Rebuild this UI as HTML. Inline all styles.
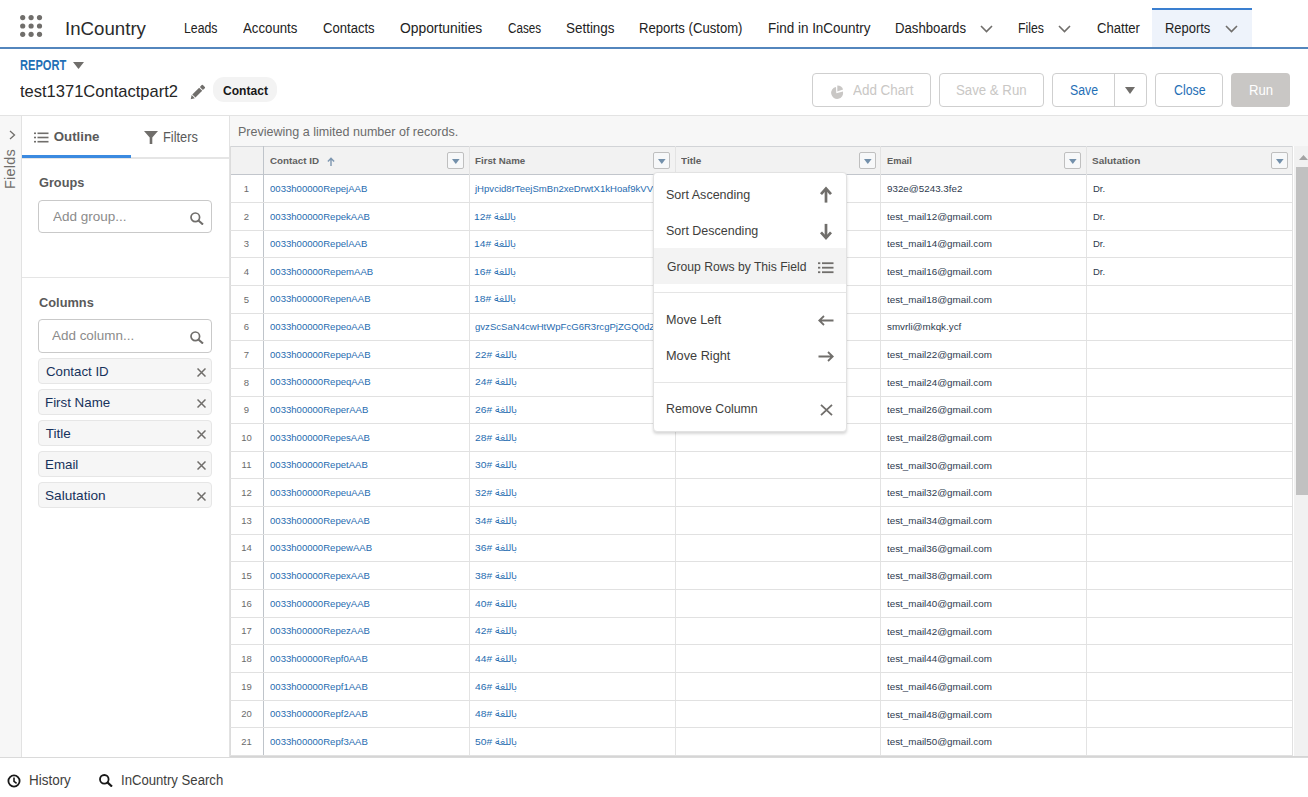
<!DOCTYPE html>
<html><head><meta charset="utf-8"><style>
html,body{margin:0;padding:0;width:1308px;height:797px;overflow:hidden;background:#fff}
body{position:relative;font-family:"Liberation Sans", sans-serif}
.t{position:absolute;white-space:nowrap;line-height:1;font-family:"Liberation Sans", sans-serif}
.r{position:absolute}
</style></head><body>
<div class="r" style="left:0px;top:0px;width:1308px;height:47px;background:#fff"></div>
<div class="r" style="left:0px;top:47px;width:1308px;height:2px;background:#5386bd"></div>
<div class="r" style="left:1152px;top:8px;width:100px;height:39px;background:#eef3fb"></div>
<div class="r" style="left:1152px;top:8px;width:100px;height:2px;background:#3a7fd0"></div>
<svg class="r" style="left:20px;top:15px;" width="23" height="23" viewBox="0 0 23 23"><circle cx="2.7" cy="2.6" r="2.6" fill="#706e6b"/><circle cx="2.7" cy="11" r="2.6" fill="#706e6b"/><circle cx="2.7" cy="19.3" r="2.6" fill="#706e6b"/><circle cx="11.1" cy="2.6" r="2.6" fill="#706e6b"/><circle cx="11.1" cy="11" r="2.6" fill="#706e6b"/><circle cx="11.1" cy="19.3" r="2.6" fill="#706e6b"/><circle cx="19.5" cy="2.6" r="2.6" fill="#706e6b"/><circle cx="19.5" cy="11" r="2.6" fill="#706e6b"/><circle cx="19.5" cy="19.3" r="2.6" fill="#706e6b"/></svg>
<div class="t" style="left:65.02px;top:19.41px;font-size:19px;font-weight:400;color:#2b2b2b;letter-spacing:0px;transform:scaleX(0.9827);transform-origin:0 0;">InCountry</div>
<div class="t" style="left:183.82px;top:21.15px;font-size:14px;font-weight:400;color:#222222;letter-spacing:0px;transform:scaleX(0.8784);transform-origin:0 0;">Leads</div>
<div class="t" style="left:243.40px;top:21.15px;font-size:14px;font-weight:400;color:#222222;letter-spacing:0px;transform:scaleX(0.9439);transform-origin:0 0;">Accounts</div>
<div class="t" style="left:322.90px;top:21.15px;font-size:14px;font-weight:400;color:#222222;letter-spacing:0px;transform:scaleX(0.9345);transform-origin:0 0;">Contacts</div>
<div class="t" style="left:400.00px;top:21.15px;font-size:14px;font-weight:400;color:#222222;letter-spacing:0px;transform:scaleX(0.9880);transform-origin:0 0;">Opportunities</div>
<div class="t" style="left:507.60px;top:21.15px;font-size:14px;font-weight:400;color:#222222;letter-spacing:0px;transform:scaleX(0.8325);transform-origin:0 0;">Cases</div>
<div class="t" style="left:566.04px;top:21.15px;font-size:14px;font-weight:400;color:#222222;letter-spacing:0px;transform:scaleX(0.9592);transform-origin:0 0;">Settings</div>
<div class="t" style="left:639.46px;top:21.15px;font-size:14px;font-weight:400;color:#222222;letter-spacing:0px;transform:scaleX(0.9367);transform-origin:0 0;">Reports (Custom)</div>
<div class="t" style="left:767.64px;top:21.15px;font-size:14px;font-weight:400;color:#222222;letter-spacing:0px;transform:scaleX(0.9613);transform-origin:0 0;">Find in InCountry</div>
<div class="t" style="left:895.46px;top:21.15px;font-size:14px;font-weight:400;color:#222222;letter-spacing:0px;transform:scaleX(0.9405);transform-origin:0 0;">Dashboards</div>
<div class="t" style="left:1018.12px;top:21.15px;font-size:14px;font-weight:400;color:#222222;letter-spacing:0px;transform:scaleX(0.8786);transform-origin:0 0;">Files</div>
<div class="t" style="left:1097.00px;top:21.15px;font-size:14px;font-weight:400;color:#222222;letter-spacing:0px;transform:scaleX(0.9348);transform-origin:0 0;">Chatter</div>
<div class="t" style="left:1165.38px;top:21.15px;font-size:14px;font-weight:400;color:#222222;letter-spacing:0px;transform:scaleX(0.9250);transform-origin:0 0;">Reports</div>
<svg class="r" style="left:979.5px;top:25px;" width="13" height="8" viewBox="0 0 13 8"><path d="M1 1 L6.5 6.5 L12 1" fill="none" stroke="#706e6b" stroke-width="1.6"/></svg>
<svg class="r" style="left:1057.5px;top:25px;" width="13" height="8" viewBox="0 0 13 8"><path d="M1 1 L6.5 6.5 L12 1" fill="none" stroke="#706e6b" stroke-width="1.6"/></svg>
<svg class="r" style="left:1225px;top:25px;" width="13" height="8" viewBox="0 0 13 8"><path d="M1 1 L6.5 6.5 L12 1" fill="none" stroke="#706e6b" stroke-width="1.6"/></svg>
<div class="r" style="left:0px;top:49px;width:1308px;height:66px;background:#fff"></div>
<div class="r" style="left:0px;top:115px;width:1308px;height:1px;background:#e3e3e3"></div>
<div class="t" style="left:19.91px;top:58.15px;font-size:14px;font-weight:700;color:#1f6fb6;letter-spacing:0px;transform:scaleX(0.7931);transform-origin:0 0;">REPORT</div>
<svg class="r" style="left:73px;top:62px;" width="11" height="7" viewBox="0 0 11 7"><path d="M0 0 L11 0 L5.5 7 Z" fill="#706e6b"/></svg>
<div class="t" style="left:19.60px;top:82.61px;font-size:17px;font-weight:400;color:#262626;letter-spacing:0px;transform:scaleX(0.9716);transform-origin:0 0;">test1371Contactpart2</div>
<svg class="r" style="left:185px;top:80px;" width="25" height="24" viewBox="0 0 25 24"><g transform="translate(5.7 19.2) rotate(-45)" fill="#706e6b"><path d="M0 0 L3.6 -2.2 L3.6 2.2 Z"/><rect x="4.5" y="-2.2" width="9.6" height="4.4"/><rect x="15" y="-2.2" width="3.6" height="4.4" rx="0.8"/></g></svg>
<div class="r" style="left:213px;top:77px;width:64px;height:25px;background:#f3f3f3;border-radius:11px"></div>
<div class="t" style="left:223.00px;top:84.17px;font-size:13.5px;font-weight:700;color:#181818;letter-spacing:0px;transform:scaleX(0.8940);transform-origin:0 0;">Contact</div>
<div class="r" style="left:812px;top:73px;width:119px;height:34px;border:1px solid #cfcfcf;border-radius:4px;background:#fff;box-sizing:border-box"></div>
<svg class="r" style="left:825px;top:80px;" width="25" height="24" viewBox="0 0 25 24"><path d="M11.3 13.2 L11 7 A6 6 0 1 0 18 11.6 Z" fill="#c9c7c5"/><path d="M12.3 11.4 L12.3 5.4 A6 6 0 0 1 18.1 9.6 Z" fill="#c9c7c5"/></svg>
<div class="t" style="left:853.20px;top:83.35px;font-size:14px;font-weight:400;color:#c9c7c5;letter-spacing:0px;transform:scaleX(0.9587);transform-origin:0 0;">Add Chart</div>
<div class="r" style="left:939px;top:73px;width:105px;height:34px;border:1px solid #cfcfcf;border-radius:4px;background:#fff;box-sizing:border-box"></div>
<div class="t" style="left:956.35px;top:83.35px;font-size:14px;font-weight:400;color:#c9c7c5;letter-spacing:0px;transform:scaleX(0.9452);transform-origin:0 0;">Save &amp; Run</div>
<div class="r" style="left:1052px;top:73px;width:95px;height:34px;border:1px solid #cfcfcf;border-radius:4px;background:#fff;box-sizing:border-box"></div>
<div class="r" style="left:1114px;top:73px;width:1px;height:34px;background:#cfcfcf"></div>
<div class="t" style="left:1069.62px;top:83.35px;font-size:14px;font-weight:400;color:#1f6fb6;letter-spacing:0px;transform:scaleX(0.8774);transform-origin:0 0;">Save</div>
<svg class="r" style="left:1125px;top:87px;" width="10" height="7" viewBox="0 0 10 7"><path d="M0 0 L10 0 L5 7 Z" fill="#706e6b"/></svg>
<div class="r" style="left:1155px;top:73px;width:68px;height:34px;border:1px solid #cfcfcf;border-radius:4px;background:#fff;box-sizing:border-box"></div>
<div class="t" style="left:1173.70px;top:83.35px;font-size:14px;font-weight:400;color:#1f6fb6;letter-spacing:0px;transform:scaleX(0.8833);transform-origin:0 0;">Close</div>
<div class="r" style="left:1231px;top:73px;width:59px;height:34px;background:#c9c7c5;border-radius:4px"></div>
<div class="t" style="left:1248.76px;top:83.35px;font-size:14px;font-weight:400;color:#fff;letter-spacing:0px;transform:scaleX(0.9375);transform-origin:0 0;">Run</div>
<div class="r" style="left:0px;top:116px;width:21px;height:641px;background:#f7f7f7"></div>
<div class="r" style="left:21px;top:116px;width:1px;height:641px;background:#e2e2e2"></div>
<div class="r" style="left:22px;top:116px;width:207px;height:641px;background:#fff"></div>
<div class="r" style="left:229px;top:116px;width:1px;height:641px;background:#e2e2e2"></div>
<div class="r" style="left:230px;top:116px;width:1078px;height:641px;background:#f7f7f7"></div>
<svg class="r" style="left:9px;top:130px;" width="7" height="10" viewBox="0 0 7 10"><path d="M1 1 L5.5 5 L1 9" fill="none" stroke="#706e6b" stroke-width="1.3"/></svg>
<div class="t" style="left:-10px;top:162px;width:40px;height:14px;font-size:14.5px;color:#706e6b;transform:rotate(-90deg);letter-spacing:0.2px;line-height:14px;text-align:center">Fields</div>
<div class="r" style="left:22px;top:157px;width:207px;height:2px;background:#e5e5e5"></div>
<div class="r" style="left:22px;top:155px;width:109px;height:3px;background:#3b8ae0"></div>
<svg class="r" style="left:34px;top:132px;" width="15" height="11" viewBox="0 0 15 11"><g fill="#706e6b"><rect x="0" y="0.5" width="2" height="1.6"/><rect x="3.5" y="0.5" width="11" height="1.6"/><rect x="0" y="4.7" width="2" height="1.6"/><rect x="3.5" y="4.7" width="11" height="1.6"/><rect x="0" y="8.9" width="2" height="1.6"/><rect x="3.5" y="8.9" width="11" height="1.6"/></g></svg>
<div class="t" style="left:53.70px;top:130.44px;font-size:13.3px;font-weight:700;color:#5a5a5a;letter-spacing:0px;">Outline</div>
<svg class="r" style="left:144px;top:131px;" width="14" height="13" viewBox="0 0 14 13"><path d="M0 0 L14 0 L8.3 6.5 L8.3 13 L5.7 13 L5.7 6.5 Z" fill="#706e6b"/></svg>
<div class="t" style="left:162.68px;top:130.15px;font-size:14px;font-weight:400;color:#5a5a5a;letter-spacing:0px;transform:scaleX(0.9162);transform-origin:0 0;">Filters</div>
<div class="t" style="left:38.80px;top:176.19px;font-size:13px;font-weight:700;color:#5a5a5a;letter-spacing:0px;transform:scaleX(0.9804);transform-origin:0 0;">Groups</div>
<div class="r" style="left:38px;top:200px;width:174px;height:33px;border:1px solid #c9c9c9;border-radius:4px;background:#fff;box-sizing:border-box"></div>
<div class="t" style="left:52.50px;top:210.25px;font-size:13.4px;font-weight:400;color:#8b8b8b;letter-spacing:0px;transform:scaleX(1.0069);transform-origin:0 0;">Add group...</div>
<svg class="r" style="left:189.5px;top:212px;" width="14" height="13" viewBox="0 0 14 13"><circle cx="5.3" cy="5.3" r="4.3" fill="none" stroke="#706e6b" stroke-width="1.7"/><path d="M8.4 8.4 L13 12.6" stroke="#706e6b" stroke-width="2.0"/></svg>
<div class="r" style="left:22px;top:277px;width:207px;height:1px;background:#e5e5e5"></div>
<div class="t" style="left:38.50px;top:295.99px;font-size:13px;font-weight:700;color:#5a5a5a;letter-spacing:0px;transform:scaleX(0.9857);transform-origin:0 0;">Columns</div>
<div class="r" style="left:38px;top:319px;width:174px;height:34px;border:1px solid #c9c9c9;border-radius:4px;background:#fff;box-sizing:border-box"></div>
<div class="t" style="left:52.30px;top:329.35px;font-size:13.4px;font-weight:400;color:#8b8b8b;letter-spacing:0px;transform:scaleX(1.0037);transform-origin:0 0;">Add column...</div>
<svg class="r" style="left:189.5px;top:331.3px;" width="14" height="13" viewBox="0 0 14 13"><circle cx="5.3" cy="5.3" r="4.3" fill="none" stroke="#706e6b" stroke-width="1.7"/><path d="M8.4 8.4 L13 12.6" stroke="#706e6b" stroke-width="2.0"/></svg>
<div class="r" style="left:38px;top:358px;width:174px;height:26px;background:#f6f6f6;border:1px solid #e6e6e6;border-radius:4px;box-sizing:border-box"></div>
<div class="t" style="left:45.80px;top:365.07px;font-size:13.5px;font-weight:400;color:#16325c;letter-spacing:0px;transform:scaleX(0.9828);transform-origin:0 0;">Contact ID</div>
<svg class="r" style="left:196.5px;top:367.5px;" width="9" height="9" viewBox="0 0 9 9"><path d="M0.5 0.5 L8.5 8.5 M8.5 0.5 L0.5 8.5" stroke="#706e6b" stroke-width="1.5"/></svg>
<div class="r" style="left:38px;top:389px;width:174px;height:26px;background:#f6f6f6;border:1px solid #e6e6e6;border-radius:4px;box-sizing:border-box"></div>
<div class="t" style="left:44.81px;top:396.07px;font-size:13.5px;font-weight:400;color:#16325c;letter-spacing:0px;transform:scaleX(0.9877);transform-origin:0 0;">First Name</div>
<svg class="r" style="left:196.5px;top:398.5px;" width="9" height="9" viewBox="0 0 9 9"><path d="M0.5 0.5 L8.5 8.5 M8.5 0.5 L0.5 8.5" stroke="#706e6b" stroke-width="1.5"/></svg>
<div class="r" style="left:38px;top:420px;width:174px;height:26px;background:#f6f6f6;border:1px solid #e6e6e6;border-radius:4px;box-sizing:border-box"></div>
<div class="t" style="left:45.80px;top:427.07px;font-size:13.5px;font-weight:400;color:#16325c;letter-spacing:0px;">Title</div>
<svg class="r" style="left:196.5px;top:429.5px;" width="9" height="9" viewBox="0 0 9 9"><path d="M0.5 0.5 L8.5 8.5 M8.5 0.5 L0.5 8.5" stroke="#706e6b" stroke-width="1.5"/></svg>
<div class="r" style="left:38px;top:451px;width:174px;height:26px;background:#f6f6f6;border:1px solid #e6e6e6;border-radius:4px;box-sizing:border-box"></div>
<div class="t" style="left:44.81px;top:458.07px;font-size:13.5px;font-weight:400;color:#16325c;letter-spacing:0px;transform:scaleX(0.9875);transform-origin:0 0;">Email</div>
<svg class="r" style="left:196.5px;top:460.5px;" width="9" height="9" viewBox="0 0 9 9"><path d="M0.5 0.5 L8.5 8.5 M8.5 0.5 L0.5 8.5" stroke="#706e6b" stroke-width="1.5"/></svg>
<div class="r" style="left:38px;top:482px;width:174px;height:26px;background:#f6f6f6;border:1px solid #e6e6e6;border-radius:4px;box-sizing:border-box"></div>
<div class="t" style="left:44.79px;top:489.07px;font-size:13.5px;font-weight:400;color:#16325c;letter-spacing:0px;transform:scaleX(1.0102);transform-origin:0 0;">Salutation</div>
<svg class="r" style="left:196.5px;top:491.5px;" width="9" height="9" viewBox="0 0 9 9"><path d="M0.5 0.5 L8.5 8.5 M8.5 0.5 L0.5 8.5" stroke="#706e6b" stroke-width="1.5"/></svg>
<div class="t" style="left:237.86px;top:124.54px;font-size:13.3px;font-weight:400;color:#6b6b6b;letter-spacing:0px;transform:scaleX(0.9427);transform-origin:0 0;">Previewing a limited number of records.</div>
<div class="r" style="left:230px;top:146px;width:1062px;height:1px;background:#d2d4d7"></div>
<div class="r" style="left:230px;top:147px;width:1062px;height:27px;background:#f2f2f2"></div>
<div class="r" style="left:230px;top:174px;width:1062px;height:1px;background:#c2c6cc"></div>
<div class="r" style="left:230px;top:175px;width:1062px;height:582px;background:#fff"></div>
<div class="r" style="left:230px;top:146px;width:1px;height:611px;background:#dcdcdc"></div>
<div class="r" style="left:1292px;top:146px;width:1px;height:611px;background:#e1e1e1"></div>
<div class="r" style="left:263px;top:146px;width:1px;height:611px;background:#bfc4ca"></div>
<div class="r" style="left:469px;top:146px;width:1px;height:611px;background:#e3e3e3"></div>
<div class="r" style="left:675px;top:146px;width:1px;height:611px;background:#e3e3e3"></div>
<div class="r" style="left:880px;top:146px;width:1px;height:611px;background:#e3e3e3"></div>
<div class="r" style="left:1086px;top:146px;width:1px;height:611px;background:#e3e3e3"></div>
<div class="t" style="left:269.60px;top:155.87px;font-size:9.6px;font-weight:700;color:#606060;letter-spacing:0px;transform:scaleX(1.0208);transform-origin:0 0;">Contact ID</div>
<div class="t" style="left:475.40px;top:155.87px;font-size:9.6px;font-weight:700;color:#606060;letter-spacing:0px;transform:scaleX(1.0120);transform-origin:0 0;">First Name</div>
<div class="t" style="left:681.00px;top:155.87px;font-size:9.6px;font-weight:700;color:#606060;letter-spacing:0px;transform:scaleX(1.0400);transform-origin:0 0;">Title</div>
<div class="t" style="left:887.00px;top:155.87px;font-size:9.6px;font-weight:700;color:#606060;letter-spacing:0px;transform:scaleX(0.9680);transform-origin:0 0;">Email</div>
<div class="t" style="left:1092.00px;top:155.87px;font-size:9.6px;font-weight:700;color:#606060;letter-spacing:0px;transform:scaleX(1.0413);transform-origin:0 0;">Salutation</div>
<svg class="r" style="left:326.5px;top:157px;" width="8" height="9" viewBox="0 0 8 9"><path d="M4 9 L4 1.5 M0.9 4.5 L4 1.2 L7.1 4.5" fill="none" stroke="#7d96b0" stroke-width="1.4"/></svg>
<div class="r" style="left:447px;top:152px;width:17px;height:17px;border:1px solid #bfbfbf;border-radius:2px;background:#f7f8f9;box-sizing:border-box"></div>
<svg class="r" style="left:451.6px;top:159px;" width="8" height="5" viewBox="0 0 8 5"><path d="M0 0 L7.6 0 L3.8 5 Z" fill="#7390ab"/></svg>
<div class="r" style="left:653px;top:152px;width:17px;height:17px;border:1px solid #bfbfbf;border-radius:2px;background:#f7f8f9;box-sizing:border-box"></div>
<svg class="r" style="left:657.6px;top:159px;" width="8" height="5" viewBox="0 0 8 5"><path d="M0 0 L7.6 0 L3.8 5 Z" fill="#7390ab"/></svg>
<div class="r" style="left:859px;top:152px;width:17px;height:17px;border:1px solid #bfbfbf;border-radius:2px;background:#f7f8f9;box-sizing:border-box"></div>
<svg class="r" style="left:863.6px;top:159px;" width="8" height="5" viewBox="0 0 8 5"><path d="M0 0 L7.6 0 L3.8 5 Z" fill="#7390ab"/></svg>
<div class="r" style="left:1064px;top:152px;width:17px;height:17px;border:1px solid #bfbfbf;border-radius:2px;background:#f7f8f9;box-sizing:border-box"></div>
<svg class="r" style="left:1068.6px;top:159px;" width="8" height="5" viewBox="0 0 8 5"><path d="M0 0 L7.6 0 L3.8 5 Z" fill="#7390ab"/></svg>
<div class="r" style="left:1271px;top:152px;width:17px;height:17px;border:1px solid #bfbfbf;border-radius:2px;background:#f7f8f9;box-sizing:border-box"></div>
<svg class="r" style="left:1275.6px;top:159px;" width="8" height="5" viewBox="0 0 8 5"><path d="M0 0 L7.6 0 L3.8 5 Z" fill="#7390ab"/></svg>
<div class="r" style="left:230px;top:202px;width:1062px;height:1px;background:#e1e1e1"></div>
<div class="t" style="left:230px;width:33px;text-align:center;top:183.96px;font-size:9.5px;color:#6b6b6b">1</div>
<div class="t" style="left:269.60px;top:183.87px;font-size:9.6px;font-weight:400;color:#1f6cb0;letter-spacing:0px;transform:scaleX(0.9969);transform-origin:0 0;">0033h00000RepejAAB</div>
<div class="t" style="left:475.40px;top:183.87px;font-size:9.6px;font-weight:400;color:#1f6cb0;letter-spacing:0px;transform:scaleX(0.9969);transform-origin:0 0;">jHpvcid8rTeejSmBn2xeDrwtX1kHoaf9kVV</div>
<div class="t" style="left:886.70px;top:184.17px;font-size:9.6px;font-weight:400;color:#2e3a4e;letter-spacing:0px;transform:scaleX(1.0225);transform-origin:0 0;">932e@5243.3fe2</div>
<div class="t" style="left:1092.50px;top:183.87px;font-size:9.6px;font-weight:400;color:#2e3a4e;letter-spacing:0px;transform:scaleX(0.9917);transform-origin:0 0;">Dr.</div>
<div class="r" style="left:230px;top:230px;width:1062px;height:1px;background:#e1e1e1"></div>
<div class="t" style="left:230px;width:33px;text-align:center;top:211.61px;font-size:9.5px;color:#6b6b6b">2</div>
<div class="t" style="left:269.60px;top:211.52px;font-size:9.6px;font-weight:400;color:#1f6cb0;letter-spacing:0px;transform:scaleX(0.9969);transform-origin:0 0;">0033h00000RepekAAB</div>
<div class="t" style="left:474.33px;top:211.52px;font-size:9.6px;font-weight:400;color:#1f6cb0;letter-spacing:0px;transform:scaleX(1.0700);transform-origin:0 0;">12# <span style="font-family:'Noto Sans Arabic UI',sans-serif">باللغة</span></div>
<div class="t" style="left:886.70px;top:211.82px;font-size:9.6px;font-weight:400;color:#2e3a4e;letter-spacing:0px;transform:scaleX(1.0225);transform-origin:0 0;">test_mail12@gmail.com</div>
<div class="t" style="left:1092.50px;top:211.52px;font-size:9.6px;font-weight:400;color:#2e3a4e;letter-spacing:0px;transform:scaleX(0.9917);transform-origin:0 0;">Dr.</div>
<div class="r" style="left:230px;top:257px;width:1062px;height:1px;background:#e1e1e1"></div>
<div class="t" style="left:230px;width:33px;text-align:center;top:239.26px;font-size:9.5px;color:#6b6b6b">3</div>
<div class="t" style="left:269.60px;top:239.17px;font-size:9.6px;font-weight:400;color:#1f6cb0;letter-spacing:0px;transform:scaleX(0.9969);transform-origin:0 0;">0033h00000RepelAAB</div>
<div class="t" style="left:474.33px;top:239.17px;font-size:9.6px;font-weight:400;color:#1f6cb0;letter-spacing:0px;transform:scaleX(1.0700);transform-origin:0 0;">14# <span style="font-family:'Noto Sans Arabic UI',sans-serif">باللغة</span></div>
<div class="t" style="left:886.70px;top:239.47px;font-size:9.6px;font-weight:400;color:#2e3a4e;letter-spacing:0px;transform:scaleX(1.0225);transform-origin:0 0;">test_mail14@gmail.com</div>
<div class="t" style="left:1092.50px;top:239.17px;font-size:9.6px;font-weight:400;color:#2e3a4e;letter-spacing:0px;transform:scaleX(0.9917);transform-origin:0 0;">Dr.</div>
<div class="r" style="left:230px;top:285px;width:1062px;height:1px;background:#e1e1e1"></div>
<div class="t" style="left:230px;width:33px;text-align:center;top:266.91px;font-size:9.5px;color:#6b6b6b">4</div>
<div class="t" style="left:269.60px;top:266.82px;font-size:9.6px;font-weight:400;color:#1f6cb0;letter-spacing:0px;transform:scaleX(0.9969);transform-origin:0 0;">0033h00000RepemAAB</div>
<div class="t" style="left:474.33px;top:266.82px;font-size:9.6px;font-weight:400;color:#1f6cb0;letter-spacing:0px;transform:scaleX(1.0700);transform-origin:0 0;">16# <span style="font-family:'Noto Sans Arabic UI',sans-serif">باللغة</span></div>
<div class="t" style="left:886.70px;top:267.12px;font-size:9.6px;font-weight:400;color:#2e3a4e;letter-spacing:0px;transform:scaleX(1.0225);transform-origin:0 0;">test_mail16@gmail.com</div>
<div class="t" style="left:1092.50px;top:266.82px;font-size:9.6px;font-weight:400;color:#2e3a4e;letter-spacing:0px;transform:scaleX(0.9917);transform-origin:0 0;">Dr.</div>
<div class="r" style="left:230px;top:313px;width:1062px;height:1px;background:#e1e1e1"></div>
<div class="t" style="left:230px;width:33px;text-align:center;top:294.56px;font-size:9.5px;color:#6b6b6b">5</div>
<div class="t" style="left:269.60px;top:294.47px;font-size:9.6px;font-weight:400;color:#1f6cb0;letter-spacing:0px;transform:scaleX(0.9969);transform-origin:0 0;">0033h00000RepenAAB</div>
<div class="t" style="left:474.33px;top:294.47px;font-size:9.6px;font-weight:400;color:#1f6cb0;letter-spacing:0px;transform:scaleX(1.0700);transform-origin:0 0;">18# <span style="font-family:'Noto Sans Arabic UI',sans-serif">باللغة</span></div>
<div class="t" style="left:886.70px;top:294.77px;font-size:9.6px;font-weight:400;color:#2e3a4e;letter-spacing:0px;transform:scaleX(1.0225);transform-origin:0 0;">test_mail18@gmail.com</div>
<div class="r" style="left:230px;top:340px;width:1062px;height:1px;background:#e1e1e1"></div>
<div class="t" style="left:230px;width:33px;text-align:center;top:322.21px;font-size:9.5px;color:#6b6b6b">6</div>
<div class="t" style="left:269.60px;top:322.12px;font-size:9.6px;font-weight:400;color:#1f6cb0;letter-spacing:0px;transform:scaleX(0.9969);transform-origin:0 0;">0033h00000RepeoAAB</div>
<div class="t" style="left:475.40px;top:322.12px;font-size:9.6px;font-weight:400;color:#1f6cb0;letter-spacing:0px;transform:scaleX(0.9969);transform-origin:0 0;">gvzScSaN4cwHtWpFcG6R3rcgPjZGQ0dZ</div>
<div class="t" style="left:886.70px;top:322.42px;font-size:9.6px;font-weight:400;color:#2e3a4e;letter-spacing:0px;transform:scaleX(1.0225);transform-origin:0 0;">smvrli@mkqk.ycf</div>
<div class="r" style="left:230px;top:368px;width:1062px;height:1px;background:#e1e1e1"></div>
<div class="t" style="left:230px;width:33px;text-align:center;top:349.86px;font-size:9.5px;color:#6b6b6b">7</div>
<div class="t" style="left:269.60px;top:349.77px;font-size:9.6px;font-weight:400;color:#1f6cb0;letter-spacing:0px;transform:scaleX(0.9969);transform-origin:0 0;">0033h00000RepepAAB</div>
<div class="t" style="left:475.40px;top:349.77px;font-size:9.6px;font-weight:400;color:#1f6cb0;letter-spacing:0px;transform:scaleX(1.0700);transform-origin:0 0;">22# <span style="font-family:'Noto Sans Arabic UI',sans-serif">باللغة</span></div>
<div class="t" style="left:886.70px;top:350.07px;font-size:9.6px;font-weight:400;color:#2e3a4e;letter-spacing:0px;transform:scaleX(1.0225);transform-origin:0 0;">test_mail22@gmail.com</div>
<div class="r" style="left:230px;top:396px;width:1062px;height:1px;background:#e1e1e1"></div>
<div class="t" style="left:230px;width:33px;text-align:center;top:377.51px;font-size:9.5px;color:#6b6b6b">8</div>
<div class="t" style="left:269.60px;top:377.42px;font-size:9.6px;font-weight:400;color:#1f6cb0;letter-spacing:0px;transform:scaleX(0.9969);transform-origin:0 0;">0033h00000RepeqAAB</div>
<div class="t" style="left:475.40px;top:377.42px;font-size:9.6px;font-weight:400;color:#1f6cb0;letter-spacing:0px;transform:scaleX(1.0700);transform-origin:0 0;">24# <span style="font-family:'Noto Sans Arabic UI',sans-serif">باللغة</span></div>
<div class="t" style="left:886.70px;top:377.72px;font-size:9.6px;font-weight:400;color:#2e3a4e;letter-spacing:0px;transform:scaleX(1.0225);transform-origin:0 0;">test_mail24@gmail.com</div>
<div class="r" style="left:230px;top:423px;width:1062px;height:1px;background:#e1e1e1"></div>
<div class="t" style="left:230px;width:33px;text-align:center;top:405.16px;font-size:9.5px;color:#6b6b6b">9</div>
<div class="t" style="left:269.60px;top:405.07px;font-size:9.6px;font-weight:400;color:#1f6cb0;letter-spacing:0px;transform:scaleX(0.9969);transform-origin:0 0;">0033h00000ReperAAB</div>
<div class="t" style="left:475.40px;top:405.07px;font-size:9.6px;font-weight:400;color:#1f6cb0;letter-spacing:0px;transform:scaleX(1.0700);transform-origin:0 0;">26# <span style="font-family:'Noto Sans Arabic UI',sans-serif">باللغة</span></div>
<div class="t" style="left:886.70px;top:405.37px;font-size:9.6px;font-weight:400;color:#2e3a4e;letter-spacing:0px;transform:scaleX(1.0225);transform-origin:0 0;">test_mail26@gmail.com</div>
<div class="r" style="left:230px;top:451px;width:1062px;height:1px;background:#e1e1e1"></div>
<div class="t" style="left:230px;width:33px;text-align:center;top:432.81px;font-size:9.5px;color:#6b6b6b">10</div>
<div class="t" style="left:269.60px;top:432.72px;font-size:9.6px;font-weight:400;color:#1f6cb0;letter-spacing:0px;transform:scaleX(0.9969);transform-origin:0 0;">0033h00000RepesAAB</div>
<div class="t" style="left:475.40px;top:432.72px;font-size:9.6px;font-weight:400;color:#1f6cb0;letter-spacing:0px;transform:scaleX(1.0700);transform-origin:0 0;">28# <span style="font-family:'Noto Sans Arabic UI',sans-serif">باللغة</span></div>
<div class="t" style="left:886.70px;top:433.02px;font-size:9.6px;font-weight:400;color:#2e3a4e;letter-spacing:0px;transform:scaleX(1.0225);transform-origin:0 0;">test_mail28@gmail.com</div>
<div class="r" style="left:230px;top:478px;width:1062px;height:1px;background:#e1e1e1"></div>
<div class="t" style="left:230px;width:33px;text-align:center;top:460.46px;font-size:9.5px;color:#6b6b6b">11</div>
<div class="t" style="left:269.60px;top:460.37px;font-size:9.6px;font-weight:400;color:#1f6cb0;letter-spacing:0px;transform:scaleX(0.9969);transform-origin:0 0;">0033h00000RepetAAB</div>
<div class="t" style="left:475.40px;top:460.37px;font-size:9.6px;font-weight:400;color:#1f6cb0;letter-spacing:0px;transform:scaleX(1.0700);transform-origin:0 0;">30# <span style="font-family:'Noto Sans Arabic UI',sans-serif">باللغة</span></div>
<div class="t" style="left:886.70px;top:460.67px;font-size:9.6px;font-weight:400;color:#2e3a4e;letter-spacing:0px;transform:scaleX(1.0225);transform-origin:0 0;">test_mail30@gmail.com</div>
<div class="r" style="left:230px;top:506px;width:1062px;height:1px;background:#e1e1e1"></div>
<div class="t" style="left:230px;width:33px;text-align:center;top:488.11px;font-size:9.5px;color:#6b6b6b">12</div>
<div class="t" style="left:269.60px;top:488.02px;font-size:9.6px;font-weight:400;color:#1f6cb0;letter-spacing:0px;transform:scaleX(0.9969);transform-origin:0 0;">0033h00000RepeuAAB</div>
<div class="t" style="left:475.40px;top:488.02px;font-size:9.6px;font-weight:400;color:#1f6cb0;letter-spacing:0px;transform:scaleX(1.0700);transform-origin:0 0;">32# <span style="font-family:'Noto Sans Arabic UI',sans-serif">باللغة</span></div>
<div class="t" style="left:886.70px;top:488.32px;font-size:9.6px;font-weight:400;color:#2e3a4e;letter-spacing:0px;transform:scaleX(1.0225);transform-origin:0 0;">test_mail32@gmail.com</div>
<div class="r" style="left:230px;top:534px;width:1062px;height:1px;background:#e1e1e1"></div>
<div class="t" style="left:230px;width:33px;text-align:center;top:515.76px;font-size:9.5px;color:#6b6b6b">13</div>
<div class="t" style="left:269.60px;top:515.67px;font-size:9.6px;font-weight:400;color:#1f6cb0;letter-spacing:0px;transform:scaleX(0.9969);transform-origin:0 0;">0033h00000RepevAAB</div>
<div class="t" style="left:475.40px;top:515.67px;font-size:9.6px;font-weight:400;color:#1f6cb0;letter-spacing:0px;transform:scaleX(1.0700);transform-origin:0 0;">34# <span style="font-family:'Noto Sans Arabic UI',sans-serif">باللغة</span></div>
<div class="t" style="left:886.70px;top:515.97px;font-size:9.6px;font-weight:400;color:#2e3a4e;letter-spacing:0px;transform:scaleX(1.0225);transform-origin:0 0;">test_mail34@gmail.com</div>
<div class="r" style="left:230px;top:561px;width:1062px;height:1px;background:#e1e1e1"></div>
<div class="t" style="left:230px;width:33px;text-align:center;top:543.41px;font-size:9.5px;color:#6b6b6b">14</div>
<div class="t" style="left:269.60px;top:543.32px;font-size:9.6px;font-weight:400;color:#1f6cb0;letter-spacing:0px;transform:scaleX(0.9969);transform-origin:0 0;">0033h00000RepewAAB</div>
<div class="t" style="left:475.40px;top:543.32px;font-size:9.6px;font-weight:400;color:#1f6cb0;letter-spacing:0px;transform:scaleX(1.0700);transform-origin:0 0;">36# <span style="font-family:'Noto Sans Arabic UI',sans-serif">باللغة</span></div>
<div class="t" style="left:886.70px;top:543.62px;font-size:9.6px;font-weight:400;color:#2e3a4e;letter-spacing:0px;transform:scaleX(1.0225);transform-origin:0 0;">test_mail36@gmail.com</div>
<div class="r" style="left:230px;top:589px;width:1062px;height:1px;background:#e1e1e1"></div>
<div class="t" style="left:230px;width:33px;text-align:center;top:571.06px;font-size:9.5px;color:#6b6b6b">15</div>
<div class="t" style="left:269.60px;top:570.97px;font-size:9.6px;font-weight:400;color:#1f6cb0;letter-spacing:0px;transform:scaleX(0.9969);transform-origin:0 0;">0033h00000RepexAAB</div>
<div class="t" style="left:475.40px;top:570.97px;font-size:9.6px;font-weight:400;color:#1f6cb0;letter-spacing:0px;transform:scaleX(1.0700);transform-origin:0 0;">38# <span style="font-family:'Noto Sans Arabic UI',sans-serif">باللغة</span></div>
<div class="t" style="left:886.70px;top:571.27px;font-size:9.6px;font-weight:400;color:#2e3a4e;letter-spacing:0px;transform:scaleX(1.0225);transform-origin:0 0;">test_mail38@gmail.com</div>
<div class="r" style="left:230px;top:617px;width:1062px;height:1px;background:#e1e1e1"></div>
<div class="t" style="left:230px;width:33px;text-align:center;top:598.71px;font-size:9.5px;color:#6b6b6b">16</div>
<div class="t" style="left:269.60px;top:598.62px;font-size:9.6px;font-weight:400;color:#1f6cb0;letter-spacing:0px;transform:scaleX(0.9969);transform-origin:0 0;">0033h00000RepeyAAB</div>
<div class="t" style="left:475.40px;top:598.62px;font-size:9.6px;font-weight:400;color:#1f6cb0;letter-spacing:0px;transform:scaleX(1.0700);transform-origin:0 0;">40# <span style="font-family:'Noto Sans Arabic UI',sans-serif">باللغة</span></div>
<div class="t" style="left:886.70px;top:598.92px;font-size:9.6px;font-weight:400;color:#2e3a4e;letter-spacing:0px;transform:scaleX(1.0225);transform-origin:0 0;">test_mail40@gmail.com</div>
<div class="r" style="left:230px;top:644px;width:1062px;height:1px;background:#e1e1e1"></div>
<div class="t" style="left:230px;width:33px;text-align:center;top:626.36px;font-size:9.5px;color:#6b6b6b">17</div>
<div class="t" style="left:269.60px;top:626.27px;font-size:9.6px;font-weight:400;color:#1f6cb0;letter-spacing:0px;transform:scaleX(0.9969);transform-origin:0 0;">0033h00000RepezAAB</div>
<div class="t" style="left:475.40px;top:626.27px;font-size:9.6px;font-weight:400;color:#1f6cb0;letter-spacing:0px;transform:scaleX(1.0700);transform-origin:0 0;">42# <span style="font-family:'Noto Sans Arabic UI',sans-serif">باللغة</span></div>
<div class="t" style="left:886.70px;top:626.57px;font-size:9.6px;font-weight:400;color:#2e3a4e;letter-spacing:0px;transform:scaleX(1.0225);transform-origin:0 0;">test_mail42@gmail.com</div>
<div class="r" style="left:230px;top:672px;width:1062px;height:1px;background:#e1e1e1"></div>
<div class="t" style="left:230px;width:33px;text-align:center;top:654.01px;font-size:9.5px;color:#6b6b6b">18</div>
<div class="t" style="left:269.60px;top:653.92px;font-size:9.6px;font-weight:400;color:#1f6cb0;letter-spacing:0px;transform:scaleX(0.9969);transform-origin:0 0;">0033h00000Repf0AAB</div>
<div class="t" style="left:475.40px;top:653.92px;font-size:9.6px;font-weight:400;color:#1f6cb0;letter-spacing:0px;transform:scaleX(1.0700);transform-origin:0 0;">44# <span style="font-family:'Noto Sans Arabic UI',sans-serif">باللغة</span></div>
<div class="t" style="left:886.70px;top:654.22px;font-size:9.6px;font-weight:400;color:#2e3a4e;letter-spacing:0px;transform:scaleX(1.0225);transform-origin:0 0;">test_mail44@gmail.com</div>
<div class="r" style="left:230px;top:700px;width:1062px;height:1px;background:#e1e1e1"></div>
<div class="t" style="left:230px;width:33px;text-align:center;top:681.66px;font-size:9.5px;color:#6b6b6b">19</div>
<div class="t" style="left:269.60px;top:681.57px;font-size:9.6px;font-weight:400;color:#1f6cb0;letter-spacing:0px;transform:scaleX(0.9969);transform-origin:0 0;">0033h00000Repf1AAB</div>
<div class="t" style="left:475.40px;top:681.57px;font-size:9.6px;font-weight:400;color:#1f6cb0;letter-spacing:0px;transform:scaleX(1.0700);transform-origin:0 0;">46# <span style="font-family:'Noto Sans Arabic UI',sans-serif">باللغة</span></div>
<div class="t" style="left:886.70px;top:681.87px;font-size:9.6px;font-weight:400;color:#2e3a4e;letter-spacing:0px;transform:scaleX(1.0225);transform-origin:0 0;">test_mail46@gmail.com</div>
<div class="r" style="left:230px;top:727px;width:1062px;height:1px;background:#e1e1e1"></div>
<div class="t" style="left:230px;width:33px;text-align:center;top:709.31px;font-size:9.5px;color:#6b6b6b">20</div>
<div class="t" style="left:269.60px;top:709.22px;font-size:9.6px;font-weight:400;color:#1f6cb0;letter-spacing:0px;transform:scaleX(0.9969);transform-origin:0 0;">0033h00000Repf2AAB</div>
<div class="t" style="left:475.40px;top:709.22px;font-size:9.6px;font-weight:400;color:#1f6cb0;letter-spacing:0px;transform:scaleX(1.0700);transform-origin:0 0;">48# <span style="font-family:'Noto Sans Arabic UI',sans-serif">باللغة</span></div>
<div class="t" style="left:886.70px;top:709.52px;font-size:9.6px;font-weight:400;color:#2e3a4e;letter-spacing:0px;transform:scaleX(1.0225);transform-origin:0 0;">test_mail48@gmail.com</div>
<div class="r" style="left:230px;top:755px;width:1062px;height:1px;background:#e1e1e1"></div>
<div class="t" style="left:230px;width:33px;text-align:center;top:736.96px;font-size:9.5px;color:#6b6b6b">21</div>
<div class="t" style="left:269.60px;top:736.87px;font-size:9.6px;font-weight:400;color:#1f6cb0;letter-spacing:0px;transform:scaleX(0.9969);transform-origin:0 0;">0033h00000Repf3AAB</div>
<div class="t" style="left:475.40px;top:736.87px;font-size:9.6px;font-weight:400;color:#1f6cb0;letter-spacing:0px;transform:scaleX(1.0700);transform-origin:0 0;">50# <span style="font-family:'Noto Sans Arabic UI',sans-serif">باللغة</span></div>
<div class="t" style="left:886.70px;top:737.17px;font-size:9.6px;font-weight:400;color:#2e3a4e;letter-spacing:0px;transform:scaleX(1.0225);transform-origin:0 0;">test_mail50@gmail.com</div>
<div class="r" style="left:1293px;top:146px;width:1px;height:611px;background:#fff"></div>
<div class="r" style="left:1294px;top:146px;width:14px;height:611px;background:#f1f1f1"></div>
<svg class="r" style="left:1299px;top:155px;" width="9" height="5" viewBox="0 0 9 5"><path d="M0 5 L4.5 0 L9 5 Z" fill="#a3a3a3"/></svg>
<div class="r" style="left:1296px;top:167px;width:12px;height:328px;background:#c1c1c1"></div>
<div class="r" style="left:230px;top:756px;width:1078px;height:1px;background:#d5d5d5"></div>
<div class="r" style="left:653px;top:172px;width:194px;height:260px;background:#fff;border:1px solid #e2e2e2;border-radius:4px;box-sizing:border-box;box-shadow:0 2px 3px rgba(0,0,0,0.16)"></div>
<div class="r" style="left:654px;top:248px;width:192px;height:36px;background:#f3f3f3"></div>
<div class="r" style="left:654px;top:292px;width:192px;height:1px;background:#e5e5e5"></div>
<div class="r" style="left:654px;top:382px;width:192px;height:1px;background:#e5e5e5"></div>
<div class="t" style="left:666.22px;top:189.06px;font-size:12.8px;font-weight:400;color:#3e3e3c;letter-spacing:0px;transform:scaleX(0.9788);transform-origin:0 0;">Sort Ascending</div>
<div class="t" style="left:666.22px;top:225.06px;font-size:12.8px;font-weight:400;color:#3e3e3c;letter-spacing:0px;transform:scaleX(0.9753);transform-origin:0 0;">Sort Descending</div>
<div class="t" style="left:667.20px;top:261.06px;font-size:12.8px;font-weight:400;color:#3e3e3c;letter-spacing:0px;transform:scaleX(0.9493);transform-origin:0 0;">Group Rows by This Field</div>
<div class="t" style="left:666.22px;top:313.96px;font-size:12.8px;font-weight:400;color:#3e3e3c;letter-spacing:0px;transform:scaleX(0.9839);transform-origin:0 0;">Move Left</div>
<div class="t" style="left:666.21px;top:349.96px;font-size:12.8px;font-weight:400;color:#3e3e3c;letter-spacing:0px;transform:scaleX(0.9938);transform-origin:0 0;">Move Right</div>
<div class="t" style="left:666.24px;top:403.06px;font-size:12.8px;font-weight:400;color:#3e3e3c;letter-spacing:0px;transform:scaleX(0.9617);transform-origin:0 0;">Remove Column</div>
<svg class="r" style="left:818px;top:185px;" width="16" height="20" viewBox="0 0 16 20"><path d="M8 17.6 L8 4.5" stroke="#706e6b" stroke-width="2.7"/><path d="M3 9.2 L8 3.6 L13 9.2" fill="none" stroke="#706e6b" stroke-width="2.7" stroke-linejoin="miter"/></svg>
<svg class="r" style="left:818px;top:222px;" width="16" height="20" viewBox="0 0 16 20"><path d="M8 1.9 L8 15" stroke="#706e6b" stroke-width="2.7"/><path d="M3 10.3 L8 15.9 L13 10.3" fill="none" stroke="#706e6b" stroke-width="2.7" stroke-linejoin="miter"/></svg>
<svg class="r" style="left:818px;top:262px;" width="16" height="12" viewBox="0 0 16 12"><g fill="#706e6b"><rect x="0" y="0.3" width="2.3" height="1.8"/><rect x="4" y="0.3" width="11.5" height="1.8"/><rect x="0" y="4.8" width="2.3" height="1.8"/><rect x="4" y="4.8" width="11.5" height="1.8"/><rect x="0" y="9.3" width="2.3" height="1.8"/><rect x="4" y="9.3" width="11.5" height="1.8"/></g></svg>
<svg class="r" style="left:818px;top:315px;" width="16" height="11" viewBox="0 0 16 11"><path d="M15.5 5.5 L1.5 5.5 M6 1 L1.2 5.5 L6 10" fill="none" stroke="#706e6b" stroke-width="1.8"/></svg>
<svg class="r" style="left:818px;top:351px;" width="16" height="11" viewBox="0 0 16 11"><path d="M0.5 5.5 L14.5 5.5 M10 1 L14.8 5.5 L10 10" fill="none" stroke="#706e6b" stroke-width="1.8"/></svg>
<svg class="r" style="left:819.5px;top:404px;" width="13" height="12" viewBox="0 0 13 12"><path d="M1 0.8 L12 11.2 M12 0.8 L1 11.2" stroke="#706e6b" stroke-width="1.8"/></svg>
<div class="r" style="left:0px;top:757px;width:1308px;height:40px;background:#fff"></div>
<div class="r" style="left:0px;top:757px;width:1308px;height:1px;background:#dadada"></div>
<svg class="r" style="left:7px;top:774px;" width="14" height="14" viewBox="0 0 14 14"><circle cx="7" cy="7" r="5.6" fill="none" stroke="#181818" stroke-width="1.8"/><path d="M7 3.5 L7 7.3 L9.6 9.4" fill="none" stroke="#181818" stroke-width="1.6"/></svg>
<div class="t" style="left:29.34px;top:773.05px;font-size:14px;font-weight:400;color:#3e3e3c;letter-spacing:0px;transform:scaleX(0.9605);transform-origin:0 0;">History</div>
<svg class="r" style="left:99px;top:774px;" width="14" height="13" viewBox="0 0 14 13"><circle cx="5.3" cy="5.3" r="4.3" fill="none" stroke="#181818" stroke-width="1.8"/><path d="M8.4 8.4 L13 12.6" stroke="#181818" stroke-width="2.1"/></svg>
<div class="t" style="left:121.06px;top:773.05px;font-size:14px;font-weight:400;color:#3e3e3c;letter-spacing:0px;transform:scaleX(0.9380);transform-origin:0 0;">InCountry Search</div>
</body></html>
